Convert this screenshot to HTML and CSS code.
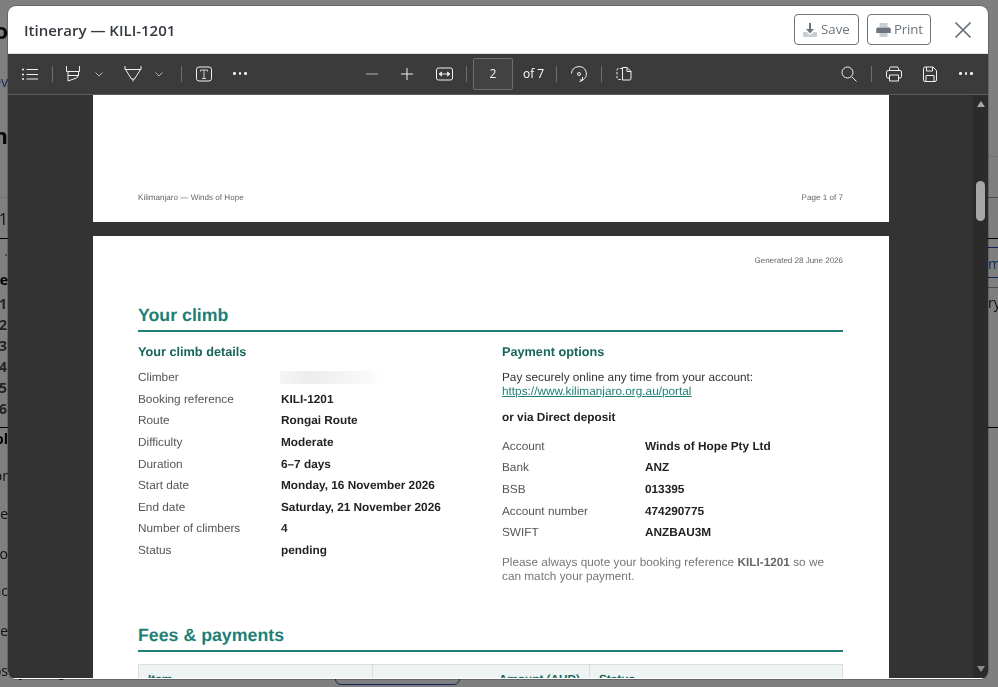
FILE: index.html
```html
<!DOCTYPE html>
<html lang="en">
<head>
<meta charset="utf-8">
<title>Itinerary — KILI-1201</title>
<link rel="stylesheet" href="styles.css">
</head>
<body>
<div class="underlay">
  <div class="peek peek-left">
    <div class="pk big dark">o</div>
    <div class="pk blue m34">ev</div>
    <div class="pk big dark m34b">n</div>
    <div class="rule faint m51"></div>
    <div class="pk one m11">1</div>
    <div class="rule black m9"></div>
    <div class="pk blue m4">.</div>
    <div class="pk strong m13">ce</div>
    <div class="nums">
      <div class="pk num">1</div>
      <div class="pk num">2</div>
      <div class="pk num">3</div>
      <div class="pk num">4</div>
      <div class="pk num">5</div>
      <div class="pk num">6</div>
    </div>
    <div class="rule black m8"></div>
    <div class="pk strong m3">ol</div>
    <div class="pk m21">or</div>
    <div class="pk m22">le</div>
    <div class="pk m24">o</div>
    <div class="pk m21">ac</div>
    <div class="pk m24">e</div>
    <div class="pk m24">os</div>
  </div>
  <div class="under-main">
    <div class="under-row">
      <div class="under-text"><span class="d1">y</span><span class="d2">g</span></div>
      <div class="under-button"></div>
    </div>
  </div>
  <div class="peek peek-right">
    <div class="rule faint"></div>
    <div class="rule grey m40"></div>
    <div class="rule black m40"></div>
    <div class="rule navy m8"></div>
    <div class="pk right blue m8">m</div>
    <div class="rule navy m5"></div>
    <div class="rule grey m9"></div>
    <div class="pk right m7">ry</div>
    <div class="rule black m116"></div>
  </div>
</div>
<div class="backdrop"></div>

<section class="modal">
  <header class="modal-head">
    <h1 class="modal-title">Itinerary — KILI-1201</h1>
    <button class="btn btn-save">
      <svg class="btn-ico" viewBox="0 0 14 14"><path class="tray" d="M0 9h3.500L7 12l3.500-3H14v5H0z"/><path class="ink" d="M6 0h2v6h3L7 10.500 3 6h3z"/></svg>Save
    </button>
    <button class="btn btn-print">
      <svg class="btn-ico wide-ico" viewBox="0 0 15 14"><path class="tray" d="M3.500 0h8v4h-8zM3.500 10h8v4h-8z"/><path class="ink" d="M2 4.500h11A1.800 1.800 0 0 1 14.800 6.300V10H.2V6.300A1.800 1.800 0 0 1 2 4.500z"/></svg>Print
    </button>
    <svg class="close" viewBox="0 0 16 16"><path d="M.5.5l15 15M15.500.5l-15 15"/></svg>
  </header>

  <div class="toolbar">
    <div class="tools">
      <svg class="ico w16" viewBox="0 0 16 16"><path d="M4.500 3.500H16M4.500 8.500H16M4.500 13H16"/><path class="wide" d="M0 3.500h2M0 8.500h2M0 13h2"/></svg>
      <i class="sep t14"></i>
      <svg class="ico w16 t12" viewBox="0 0 16 16"><path d="M1.500 0v5.500h13V0M3 5.500V15l8.500-3 2-2.500v-4M3 9.500h10.500"/></svg>
      <svg class="chev t13" viewBox="0 0 10 10"><path d="M1.500 3.500L5 7l3.500-3.500"/></svg>
      <svg class="ico w18 t20" viewBox="0 0 18 16"><path d="M1 0v3.500h16V0M1.500 3.500L7.500 13h3l6-9.500"/><path class="tip" d="M7.500 13h3L9 16z"/></svg>
      <svg class="chev t12" viewBox="0 0 10 10"><path d="M1.500 3.500L5 7l3.500-3.500"/></svg>
      <i class="sep t17"></i>
      <svg class="ico w16 t14" viewBox="0 0 16 16"><rect x=".5" y="1" width="15" height="14" rx="2.500"/><path class="tee" d="M4.500 5.500V4h7v1.500M8 4v8.500M6 12.500h4"/></svg>
      <span class="dots t21"><b></b><b></b><b></b></span>
    </div>
    <div class="tools tools-center">
      <svg class="ico w12 dim" viewBox="0 0 12 12"><path d="M0 6h12"/></svg>
      <svg class="ico w12 t23" viewBox="0 0 12 12"><path d="M0 6h12M6 0v12"/></svg>
      <svg class="ico w17 t23" viewBox="0 0 17 14"><rect x=".5" y="1" width="16" height="12" rx="2"/><path class="fit" d="M3 7l2.500-2v4zM14 7l-2.500-2v4zM5.500 7h6"/></svg>
      <i class="sep t13"></i>
      <div class="page-input">2</div>
      <span class="page-of">of 7</span>
      <i class="sep t12"></i>
      <svg class="ico w16 t14" viewBox="0 0 16 16"><path d="M.5 7.500A7.500 7.500 0 0 1 15 5.500c1.200 3.500-.4 7-3.500 8.500H9M11.500 11v3.500l-3 1"/><circle cx="8" cy="8" r="1.500"/></svg>
      <i class="sep t14"></i>
      <svg class="ico w16 t14" viewBox="0 0 16 16"><path class="dash" d="M6.500 2.500H2.500a1.500 1.500 0 0 0-1.500 1.500v8a1.500 1.500 0 0 0 1.500 1.500h4"/><path d="M6.500 1.500H11l4 4v7a1.500 1.500 0 0 1-1.500 1.500h-7zM11 1.500v4h4"/></svg>
    </div>
    <div class="tools tools-right">
      <svg class="ico w16" viewBox="0 0 16 16"><circle cx="6.500" cy="6.500" r="5.500"/><path d="M10.500 10.500l5 5"/></svg>
      <i class="sep t14"></i>
      <svg class="ico w16 t14" viewBox="0 0 16 16"><path d="M3.500 4.500V2.500a1.500 1.500 0 0 1 1.500-1.500h6a1.500 1.500 0 0 1 1.500 1.500v2M3.500 12H2a1.500 1.500 0 0 1-1.500-1.500V6A1.500 1.500 0 0 1 2 4.500h12A1.500 1.500 0 0 1 15.500 6v4.500A1.500 1.500 0 0 1 14 12h-1.500M3.500 9h9v6h-9z"/></svg>
      <svg class="ico w14 t21" viewBox="0 0 14 16"><path d="M.5 2.500a1.500 1.500 0 0 1 1.500-1.500h8l3.500 3.500V14a1.500 1.500 0 0 1-1.500 1.500H2A1.500 1.500 0 0 1 .5 14zM3.500 1v4h6V1M3 15.500V9.500h8v6"/></svg>
      <span class="dots t22"><b></b><b></b><b></b></span>
    </div>
  </div>

  <div class="viewer">
    <div class="pages">
      <article class="page page-one">
        <div class="page-foot"><span>Kilimanjaro — Winds of Hope</span><span>Page 1 of 7</span></div>
      </article>
      <article class="page page-two">
        <div class="generated">Generated 28 June 2026</div>
        <h2 class="section">Your climb</h2>
        <div class="columns">
          <div>
            <h3 class="sub">Your climb details</h3>
            <dl class="facts">
              <dt>Climber</dt><dd><span class="smear"></span></dd>
              <dt>Booking reference</dt><dd>KILI-1201</dd>
              <dt>Route</dt><dd>Rongai Route</dd>
              <dt>Difficulty</dt><dd>Moderate</dd>
              <dt>Duration</dt><dd>6–7 days</dd>
              <dt>Start date</dt><dd>Monday, 16 November 2026</dd>
              <dt>End date</dt><dd>Saturday, 21 November 2026</dd>
              <dt>Number of climbers</dt><dd>4</dd>
              <dt>Status</dt><dd>pending</dd>
            </dl>
          </div>
          <div>
            <h3 class="sub">Payment options</h3>
            <p class="pay">Pay securely online any time from your account:<br><a class="link">https://www.kilimanjaro.org.au/portal</a></p>
            <p class="or">or via Direct deposit</p>
            <dl class="facts bank">
              <dt>Account</dt><dd>Winds of Hope Pty Ltd</dd>
              <dt>Bank</dt><dd>ANZ</dd>
              <dt>BSB</dt><dd>013395</dd>
              <dt>Account number</dt><dd>474290775</dd>
              <dt>SWIFT</dt><dd>ANZBAU3M</dd>
            </dl>
            <p class="note">Please always quote your booking reference <b>KILI-1201</b> so we can match your payment.</p>
          </div>
        </div>
        <h2 class="section fees">Fees &amp; payments</h2>
        <table class="fee-table">
          <thead><tr><th class="c1">Item</th><th class="c2">Amount (AUD)</th><th class="c3">Status</th></tr></thead>
        </table>
      </article>
    </div>
    <div class="scrollbar">
      <span class="arrow up"></span>
      <span class="thumb"></span>
      <span class="arrow down"></span>
    </div>
  </div>
</section>
</body>
</html>
```

FILE: styles.css
```css
* { box-sizing: border-box; }
html, body { margin: 0; height: 100%; overflow: hidden; background: #fff; }
body { font-family: "Open Sans", "Liberation Sans", sans-serif; }

/* page behind the dialog */
.underlay { position: fixed; inset: 0; display: flex; color: #222; font-size: 14px; }
.peek { flex: none; display: flex; flex-direction: column; }
.peek-left { width: 8px; padding-top: 20px; }
.peek-right { width: 10px; padding-top: 156px; }
.under-main { flex: 1; display: flex; flex-direction: column; justify-content: flex-end; padding-bottom: 2px; }
.under-row { display: flex; align-items: flex-end; }
.under-text { width: 327px; height: 20px; line-height: 20px; margin-bottom: 4px; font-size: 14px; color: #222; }
.d1 { margin-left: 11px; }
.d2 { margin-left: 32px; }
.under-button { width: 125px; height: 36px; border: 1px solid #2a4fa8; border-radius: 6px; }

.pk { height: 16px; line-height: 16px; display: flex; justify-content: flex-end; white-space: nowrap; }
.pk.right { justify-content: flex-start; }
.big { height: 20px; line-height: 20px; font-size: 22px; font-weight: 700; }
.dark { color: #111; }
.blue { color: #1d5fc4; }
.strong { font-weight: 700; color: #000; }
.one { height: 20px; line-height: 20px; font-size: 16px; }
.nums { margin-top: 5px; }
.num { height: 21px; line-height: 21px; font-weight: 700; color: #444; padding-right: 1px; }

.rule { height: 1px; flex: none; }
.faint { background: #e4e4e4; }
.grey { background: #999; }
.black { background: #000; }
.navy { background: #1d4fb0; }

.m3 { margin-top: 3px; } .m4 { margin-top: 4px; } .m5 { margin-top: 5px; } .m7 { margin-top: 7px; }
.m8 { margin-top: 8px; } .m9 { margin-top: 9px; } .m11 { margin-top: 11px; } .m13 { margin-top: 13px; }
.m21 { margin-top: 21px; } .m22 { margin-top: 22px; } .m24 { margin-top: 24px; } .m34 { margin-top: 34px; }
.m34b { margin-top: 34px; height: 22px; line-height: 22px; } .m40 { margin-top: 40px; }
.m51 { margin-top: 51px; } .m116 { margin-top: 116px; }

.backdrop { position: fixed; inset: 0; background: rgba(0, 0, 0, .5); }

/* dialog */
.modal {
  position: fixed; top: 6px; left: 8px; width: 980px; height: 673px;
  display: flex; flex-direction: column; overflow: hidden;
  background: #fff; border-radius: 8px; box-shadow: 0 0 0 1px rgba(0, 0, 0, .2);
  padding-bottom: 1px;
}
.modal-head {
  flex: none; height: 48px; display: flex; align-items: center;
  padding: 0 17px 0 16px; border-bottom: 1px solid #dee2e6;
}
.modal-title { flex: 1; margin: 0; font-size: 15px; line-height: 20px; font-weight: 600; color: #343a40; }
.btn {
  flex: none; height: 31px; padding: 0 0 0 8px; display: flex; align-items: center; gap: 4px;
  font: 400 13.300px/1 "Open Sans", sans-serif; color: #6c757d;
  background: #fff; border: 1px solid #6c757d; border-radius: 4px;
}
.btn-save { width: 65px; }
.btn-print { width: 64px; margin-left: 8px; margin-right: 24px; gap: 3px; letter-spacing: -.2px; }
.btn-ico { width: 14px; height: 14px; flex: none; }
.wide-ico { width: 15px; }
.btn-ico .tray { fill: #c9ced3; }
.btn-ico .ink { fill: #6c757d; }
.close { width: 16px; height: 16px; fill: none; stroke: #6c757d; stroke-width: 1.600; }

/* pdf toolbar */
.toolbar {
  flex: none; height: 41px; display: grid; grid-template-columns: 1fr auto 1fr; align-items: center;
  padding: 0 15px 1px 14px; background: #3b3b3b; border-bottom: 1px solid #5c5c5c;
}
.tools { display: flex; align-items: center; }
.tools-center { padding-left: 3px; }
.tools-right { justify-content: flex-end; }
.ico { flex: none; fill: none; stroke: #f2f2f2; stroke-width: 1; height: 16px; }
.ico .wide { stroke-width: 1.600; }
.ico .dash { stroke-dasharray: 2.500 1.500; }
.ico .tip { fill: #bdbdbd; stroke: none; }
.ico .tee { stroke: #cfcfcf; }
.ico .fit { fill: #e0e0e0; stroke: #e0e0e0; }
.dim { stroke: #8e8e8e; stroke-width: 1.600; }
.w12 { width: 12px; height: 12px; }
.w14 { width: 14px; }
.w16 { width: 16px; }
.w17 { width: 17px; height: 14px; }
.w18 { width: 18px; }
.chev { flex: none; width: 10px; height: 10px; fill: none; stroke: #b5b5b5; stroke-width: 1; }
.sep { flex: none; width: 1px; height: 16px; background: #6f6f6f; }
.t12 { margin-left: 12px; } .t13 { margin-left: 13px; } .t14 { margin-left: 14px; } .t17 { margin-left: 17px; }
.t20 { margin-left: 20px; } .t21 { margin-left: 21px; } .t22 { margin-left: 22px; } .t23 { margin-left: 23px; }
.dots { flex: none; display: flex; gap: 3px; width: 14px; }
.dots b { width: 2.500px; height: 2.500px; border-radius: 50%; background: #f2f2f2; }
.page-input {
  flex: none; margin-left: 6px; width: 40px; height: 32px; line-height: 30px; text-align: center;
  font-size: 12px; color: #f5f5f5; background: #424242; border: 1px solid #6e6e6e; border-radius: 2px;
}
.page-of { flex: none; margin-left: 10px; width: 21px; font-size: 12px; line-height: 16px; font-weight: 500; color: #fff; white-space: nowrap; }

/* viewer */
.viewer { flex: 1; min-height: 0; display: flex; background: #333; }
.pages { flex: 1; min-width: 0; overflow: hidden; }
.page {
  width: 796px; margin: 0 84px 0 85px; background: #fff;
  font-family: "Liberation Sans", Arial, sans-serif; text-rendering: geometricPrecision;
}
.page-one { height: 127px; margin-bottom: 14px; padding: 97px 46px 0 45px; }
.page-foot { display: flex; justify-content: space-between; font-size: 8.100px; line-height: 12px; color: #666; filter: blur(.25px); }
.page-two { padding: 19px 46px 0 45px; height: 700px; }
.generated { font-size: 8px; line-height: 12px; color: #666; text-align: right; filter: blur(.25px); }
.section {
  margin: 36px 0 0; height: 29px; padding-top: 1px; font-size: 17.750px; line-height: 22px; font-weight: 700; color: #1f7f74;
  border-bottom: 2px solid #1f7f74;
}
.columns { display: grid; grid-template-columns: 364px 1fr; margin-top: 13px; filter: blur(.25px); }
.sub { margin: 0; font-size: 12.700px; line-height: 15px; font-weight: 700; color: #17665c; }
.facts {
  margin: 6.500px 0 0; display: grid; grid-template-columns: 143px 1fr; grid-auto-rows: 21.600px;
  align-items: center; font-size: 11.800px; color: #555;
}
.facts dt { font-weight: 400; }
.facts dd { margin: 0; font-weight: 700; color: #222; }
.smear {
  display: block; width: 100px; height: 13px; margin-left: -1px;
  background: linear-gradient(90deg, #f5f5f5, #ededed 30%, #f3f3f3 60%, #fafafa 90%, #fff);
}
.pay { margin: 10px 0 0; font-size: 11.800px; line-height: 14px; color: #333; }
.link { color: #1f7f74; text-decoration: underline; }
.or { margin: 12px 0 0; font-size: 11.800px; line-height: 14px; font-weight: 700; color: #222; }
.facts.bank { margin-top: 11px; }
.note { margin: 12px 0 0; font-size: 11.800px; line-height: 14px; color: #777; width: 340px; }
.note b { color: #666; }
.section.fees { margin-top: 40.500px; }
.fee-table {
  width: 100%; margin-top: 12px; border-collapse: collapse; table-layout: fixed; font-size: 11.800px;
}
.fee-table th { height: 30px; padding: 7px 9px 3px; background: #eef3f3; border: 1px solid #ddd; color: #17665c; text-align: left; vertical-align: top; line-height: 14px; }
.fee-table .c1 { width: 234px; }
.fee-table .c2 { width: 217px; text-align: right; }

/* scrollbar */
.scrollbar { flex: none; width: 15px; display: flex; flex-direction: column; align-items: center; background: #2b2b2b; padding: 6px 0 6px; }
.arrow { flex: none; width: 0; height: 0; border-left: 4.500px solid transparent; border-right: 4.500px solid transparent; }
.up { border-bottom: 6px solid #a8a8a8; }
.down { margin-top: auto; border-top: 6px solid #8c8c8c; }
.thumb { width: 9px; height: 40px; margin-top: 74px; border-radius: 5px; background: #a6a6a6; }
```
